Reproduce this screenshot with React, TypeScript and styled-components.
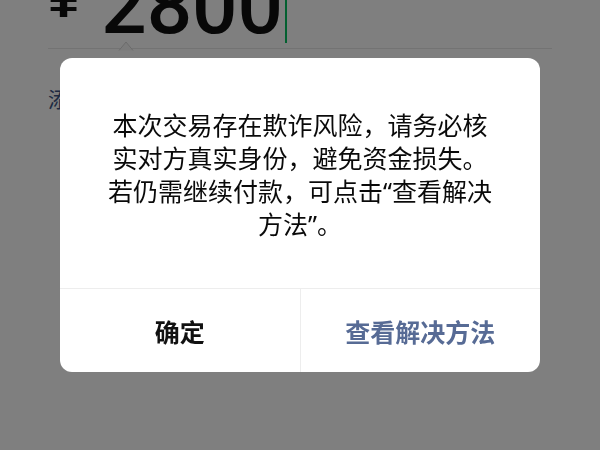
import styled, { createGlobalStyle } from 'styled-components';

const GlobalStyle = createGlobalStyle`
  html, body {
    margin: 0;
    padding: 0;
    background: #ffffff;
  }
  body {
    font-family: "Noto Sans", "Noto Sans CJK SC", sans-serif;
  }
`;

export default function App() {
  return (
    <>
      <GlobalStyle />
      <Page>
        <AmountField>
          <Currency>¥</Currency>
          <Amount>2800</Amount>
          <Cursor />
          <Caret width="16" height="10" viewBox="0 0 16 10">
            <path d="M1 9.5 L8 1 L15 9.5" fill="#f7f7f7" stroke="#d6d6d6" strokeWidth="1" />
          </Caret>
        </AmountField>
        <NoteLink>添加转账说明</NoteLink>
      </Page>
      <Mask>
        <Dialog>
          <Message>
            本次交易存在欺诈风险，请务必核
            <br />
            实对方真实身份，避免资金损失。
            <br />
            若仍需继续付款，可点击“查看解决
            <br />
            方法”。
          </Message>
          <Actions>
            <Action>确定</Action>
            <Action $primary>查看解决方法</Action>
          </Actions>
        </Dialog>
      </Mask>
    </>
  );
}

const Page = styled.main`
  width: 600px;
  height: 450px;
  overflow: hidden;
  padding: 0 48px;
  box-sizing: border-box;
  background: #ffffff;
`;

const AmountField = styled.div`
  position: relative;
  display: flex;
  align-items: flex-start;
  margin-top: -34px;
  padding-bottom: 2px;
  border-bottom: 1px solid #e6e6e6;
`;

const Currency = styled.span`
  font-family: "Liberation Sans", Arial, sans-serif;
  font-weight: 700;
  font-size: 56px;
  line-height: 56px;
  margin-top: 4px;
  color: #111111;
`;

const Amount = styled.span`
  font-family: Roboto, "Liberation Sans", sans-serif;
  font-weight: 500;
  font-size: 80px;
  line-height: 80px;
  margin-left: 22px;
  color: #111111;
`;

const Cursor = styled.span`
  width: 2px;
  height: 77px;
  margin-left: 2px;
  background: #07c160;
`;

const Caret = styled.svg`
  position: absolute;
  left: 70px;
  bottom: -3px;
`;

const NoteLink = styled.div`
  margin-top: 36px;
  font-size: 21px;
  line-height: 28px;
  color: #3f5585;
`;

const Mask = styled.div`
  position: fixed;
  inset: 0;
  background: rgba(0, 0, 0, 0.5);
  display: flex;
  justify-content: center;
  align-items: flex-start;
  padding-top: 58px;
`;

const Dialog = styled.div`
  width: 480px;
  background: #ffffff;
  border-radius: 12px;
  overflow: hidden;
`;

const Message = styled.p`
  margin: 0;
  padding: 51px 20px 47px;
  text-align: center;
  white-space: nowrap;
  font-size: 25px;
  line-height: 33px;
  color: #0a0a0a;
`;

const Actions = styled.div`
  display: flex;
  border-top: 1px solid #ededed;
`;

const Action = styled.button<{ $primary?: boolean }>`
  flex: 1;
  height: 83px;
  margin: 0;
  padding: 0;
  border: none;
  background: transparent;
  font-family: "Noto Sans CJK SC", sans-serif;
  font-size: 25px;
  font-weight: 700;
  color: ${(p) => (p.$primary ? '#576b95' : '#111111')};
  & + & {
    border-left: 1px solid #ededed;
  }
`;
